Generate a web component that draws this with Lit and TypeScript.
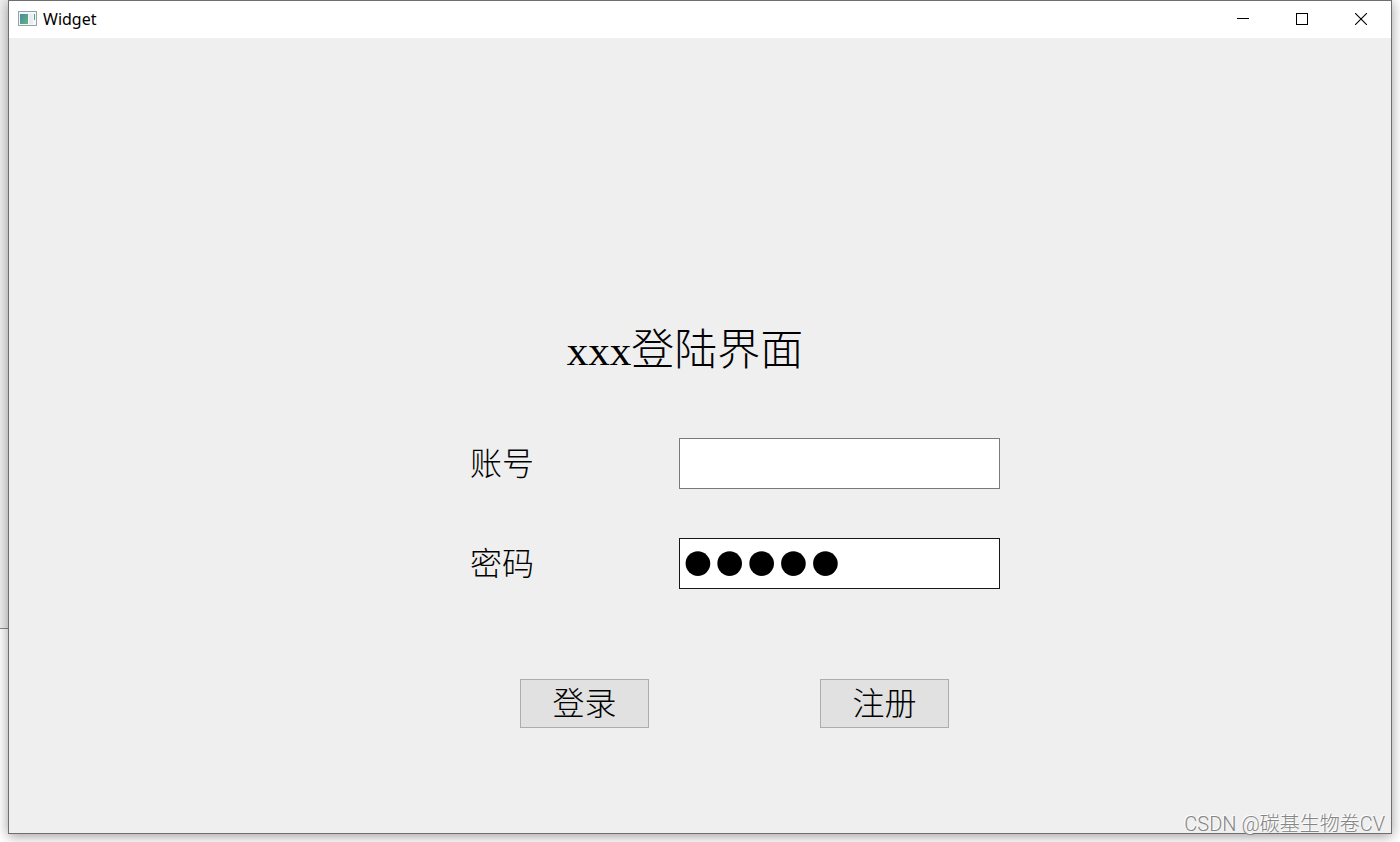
import { LitElement, html, css } from "lit";
import { customElement, state } from "lit/decorators.js";

@customElement("window-bar")
class WindowBar extends LitElement {
  static styles = css`
    :host {
      display: flex;
      align-items: center;
      box-sizing: border-box;
      height: 37px;
      padding: 0 1px 2px 0;
      background: #fff;
      font: 16px/20px "Noto Sans", "Open Sans", sans-serif;
      color: #000;
    }
    .icon {
      margin: 0 6px 0 9px;
    }
    .name {
      flex: 1;
    }
    .control {
      width: 59px;
      height: 35px;
      padding: 0;
      border: 0;
      background: none;
      display: grid;
      place-items: center;
    }
    svg {
      display: block;
    }
  `;

  render() {
    return html`
      <svg class="icon" width="19" height="15" viewBox="0 0 19 15">
        <defs>
          <linearGradient id="pane" x1="0" y1="0" x2="1" y2="1">
            <stop offset="0" stop-color="#4a86a8" />
            <stop offset="1" stop-color="#5fb878" />
          </linearGradient>
        </defs>
        <rect x="0.5" y="0.5" width="18" height="14" fill="#f4f6f7" stroke="#99a1a8" />
        <rect x="2" y="3" width="8" height="10" fill="url(#pane)" />
        <rect x="11" y="3" width="4" height="10" fill="#e9eded" />
        <rect x="16" y="3" width="1" height="6" fill="#4f9e98" />
      </svg>
      <span class="name">Widget</span>
      <button class="control" aria-label="Minimize">
        <svg width="12" height="12" viewBox="0 0 12 12"><path d="M0 5.5H12" stroke="#000" /></svg>
      </button>
      <button class="control" aria-label="Maximize">
        <svg width="12" height="12" viewBox="0 0 12 12">
          <rect x="0.5" y="0.5" width="11" height="11" fill="none" stroke="#000" />
        </svg>
      </button>
      <button class="control" aria-label="Close">
        <svg width="12" height="12" viewBox="0 0 12 12">
          <path d="M0 0L12 12M12 0L0 12" stroke="#000" stroke-width="1.1" />
        </svg>
      </button>
    `;
  }
}

@customElement("app-root")
class AppRoot extends LitElement {
  static styles = css`
    :host {
      display: flex;
      box-sizing: border-box;
      min-height: 100vh;
      padding: 0 8px 8px;
      background: linear-gradient(#f0f0f0 0 628px, #8c8c8c 628px 629px, #fff 629px) left / 8px 100% no-repeat #fff;
      font-family: "Liberation Serif", "Noto Sans CJK SC", serif;
      font-weight: 300;
      color: #000;
    }
    .window {
      position: relative;
      flex: 1;
      display: flex;
      flex-direction: column;
      background: #efefef;
      border: 1px solid #6e6e6e;
      box-shadow: 0 2px 12px rgba(0, 0, 0, 0.4);
    }
    .content {
      flex: 1;
      display: flex;
      justify-content: center;
      padding: 285px 0 0 70px;
    }
    .form {
      width: 530px;
    }
    .title {
      margin: 0 100px 59px 0;
      font-size: 43px;
      font-weight: 300;
      line-height: 56px;
      text-align: center;
    }
    .field {
      display: flex;
      align-items: center;
      justify-content: space-between;
      margin-bottom: 49px;
      font-size: 32px;
      line-height: 44px;
    }
    .input {
      box-sizing: border-box;
      width: 321px;
      height: 51px;
      padding: 0 4px;
      border: 1px solid #7a7a7a;
      border-radius: 0;
      outline: none;
      background: #fff;
      font: 32px/47px "Liberation Serif", "Noto Sans CJK SC", serif;
    }
    .secret {
      border-color: #171717;
      padding: 0 2px 2px;
      font: 91px/47px "Liberation Sans", sans-serif;
    }
    .actions {
      display: flex;
      justify-content: space-between;
      margin-top: 90px;
      padding: 0 51px 0 50px;
    }
    .action {
      box-sizing: border-box;
      width: 129px;
      height: 49px;
      padding: 0 0 4px;
      border: 1px solid #adadad;
      background: #e1e1e1;
      color: #000;
      font: 300 32px/43px "Noto Sans CJK SC", sans-serif;
    }
    .credit {
      position: absolute;
      right: 6px;
      bottom: -2px;
      font: 300 20px/22px Roboto, "Noto Sans CJK SC", sans-serif;
      color: #858585;
      text-shadow: -1px -1px 0 #fff;
    }
  `;

  @state() private account = "";
  @state() private password = "12345";

  render() {
    return html`
      <main class="window">
        <window-bar></window-bar>
        <div class="content">
          <form class="form" @submit=${(e: Event) => e.preventDefault()}>
            <h1 class="title">xxx登陆界面</h1>
            <div class="field">
              <label for="account">账号</label>
              <input class="input" id="account" type="text" .value=${this.account} />
            </div>
            <div class="field">
              <label for="password">密码</label>
              <input class="input secret" id="password" type="password" .value=${this.password} />
            </div>
            <div class="actions">
              <button class="action" type="submit">登录</button>
              <button class="action" type="button">注册</button>
            </div>
          </form>
        </div>
        <div class="credit">CSDN @碳基生物卷CV</div>
      </main>
    `;
  }
}
